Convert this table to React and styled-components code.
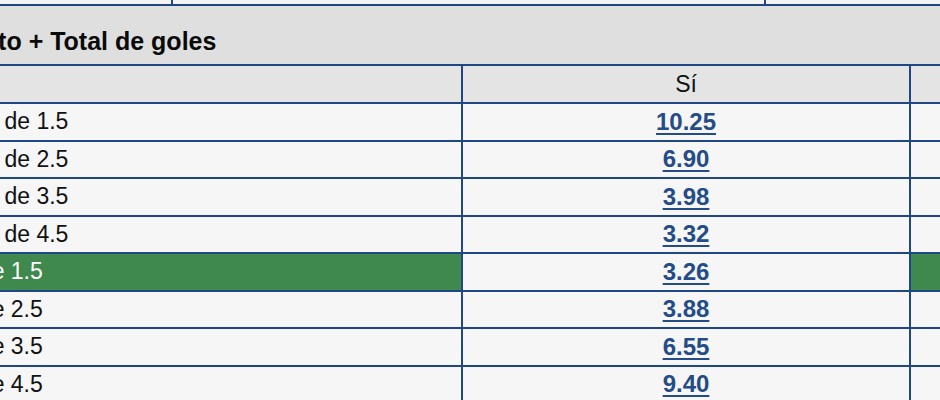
import React from 'react';
import styled, { createGlobalStyle } from 'styled-components';

const BLUE = '#1e4783';
const GREEN = '#3f894e';

const Global = createGlobalStyle`
  html, body {
    margin: 0;
    padding: 0;
    overflow: hidden;
    background: #f6f6f6;
  }
  body {
    font-family: "Liberation Sans", Arial, Helvetica, sans-serif;
    color: #111;
  }
`;

const Viewport = styled.div`
  width: 940px;
  height: 400px;
  overflow: hidden;
`;

const Sheet = styled.div`
  margin-left: -92px;
  width: 1460px;
`;

const PrevRow = styled.div`
  display: grid;
  grid-template-columns: 265px 593px 1fr;
  height: 6px;
  background: #f4f4f4;
`;

const PrevCell = styled.div`
  box-sizing: border-box;
  border-bottom: 2px solid ${BLUE};
  border-right: ${(p) => (p.$last ? 'none' : `2px solid ${BLUE}`)};
`;

const TitleBar = styled.div`
  box-sizing: border-box;
  height: 60px;
  padding: 23px 0 0 4px;
  background: #dfdfdf;
  border-bottom: 2px solid ${BLUE};
  font-size: 25px;
  line-height: 24px;
  font-weight: 700;
  color: #0a0a0a;
  white-space: nowrap;
`;

const Row = styled.div`
  display: grid;
  grid-template-columns: 555px 448px 1fr;
  height: ${(p) => p.$h}px;
`;

const Cell = styled.div`
  box-sizing: border-box;
  display: flex;
  align-items: center;
  border-bottom: 2px solid ${BLUE};
  border-right: ${(p) => (p.$last ? 'none' : `2px solid ${BLUE}`)};
  white-space: nowrap;
  overflow: hidden;
`;

const HeadCell = styled(Cell)`
  justify-content: center;
  background: #e4e4e4;
  font-size: 23px;
  color: #111;
`;

const LabelCell = styled(Cell)`
  padding-left: 21px;
  font-size: 23px;
  background: ${(p) => (p.$active ? GREEN : '#f6f6f6')};
  color: ${(p) => (p.$active ? '#fff' : '#111')};
`;

const OddsCell = styled(Cell)`
  justify-content: center;
  background: ${(p) => (p.$active ? GREEN : '#f6f6f6')};
`;

const Odd = styled.a`
  font-size: 24px;
  font-weight: 700;
  color: ${(p) => (p.$active ? '#fff' : '#234c88')};
  text-decoration: underline;
  text-decoration-thickness: 2px;
  text-underline-offset: 3px;
`;

const rows = [
  { label: 'Menos de 1.5', yes: '10.25', no: '4.20' },
  { label: 'Menos de 2.5', yes: '6.90', no: '2.05' },
  { label: 'Menos de 3.5', yes: '3.98', no: '1.52' },
  { label: 'Menos de 4.5', yes: '3.32', no: '1.30' },
  { label: 'Más de 1.5', yes: '3.26', no: '2.75', active: true },
  { label: 'Más de 2.5', yes: '3.88', no: '4.10' },
  { label: 'Más de 3.5', yes: '6.55', no: '7.50' },
  { label: 'Más de 4.5', yes: '9.40', no: '15.00' },
];

export default function App() {
  return (
    <Viewport>
      <Global />
      <Sheet>
        <PrevRow>
          <PrevCell />
          <PrevCell />
          <PrevCell $last />
        </PrevRow>
        <TitleBar>Conjunto + Total de goles</TitleBar>
        <Row $h={38}>
          <HeadCell />
          <HeadCell>Sí</HeadCell>
          <HeadCell $last>No</HeadCell>
        </Row>
        {rows.map((r) => (
          <Row key={r.label} $h={37.5}>
            <LabelCell $active={r.active}>{r.label}</LabelCell>
            <OddsCell>
              <Odd href="#">{r.yes}</Odd>
            </OddsCell>
            <OddsCell $last $active={r.active}>
              <Odd href="#" $active={r.active}>{r.no}</Odd>
            </OddsCell>
          </Row>
        ))}
      </Sheet>
    </Viewport>
  );
}
